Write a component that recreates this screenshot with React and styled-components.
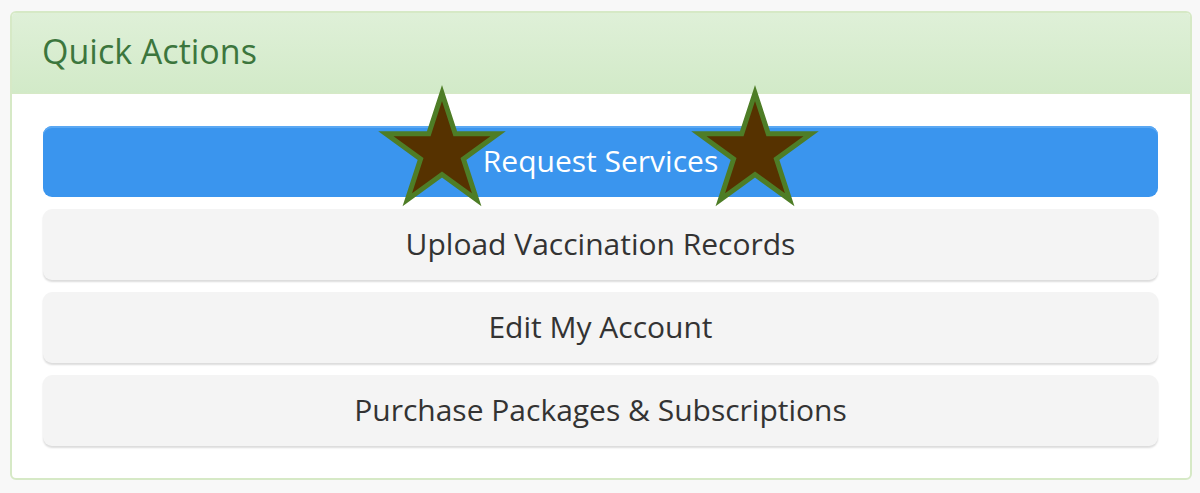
import React from "react";
import styled, { createGlobalStyle } from "styled-components";

const Global = createGlobalStyle`
  html, body { margin: 0; padding: 0; background: #f8f8f8; }
  body { font-family: "Open Sans", "Liberation Sans", sans-serif; }
`;

const Page = styled.div`
  padding: 11px 8px 0 10px;
`;

const Panel = styled.section`
  border: 2px solid #d6e9c6;
  border-radius: 6px;
  background: #fff;
  overflow: hidden;
`;

const Header = styled.header`
  height: 81px;
  box-sizing: border-box;
  display: flex;
  align-items: center;
  padding: 0 31px 5px 30px;
  background: linear-gradient(to bottom, #dff0d8 0%, #d2eac8 100%);
  border-bottom: 1px solid #d6e9c6;
`;

const Title = styled.h2`
  margin: 0;
  font-weight: 400;
  font-size: 34px;
  color: #3c763d;
  line-height: 1;
`;

const Body = styled.div`
  padding: 32px 32px 32px 31px;
  display: flex;
  flex-direction: column;
  gap: 12px;
`;

const ActionButton = styled.button`
  position: relative;
  height: 71px;
  border: none;
  border-radius: 9px;
  padding: 0 0 2px;
  font-family: "Open Sans", "Liberation Sans", sans-serif;
  font-size: 30px;
  font-weight: 400;
  cursor: pointer;
  background: ${(p) => (p.$primary ? "#3a95ee" : "#f4f4f4")};
  color: ${(p) => (p.$primary ? "#fff" : "#333")};
  box-shadow: ${(p) =>
    p.$primary
      ? "inset 0 2px 0 #5aa8f3"
      : "0 2px 2px rgba(0,0,0,0.14)"};
`;

const Star = styled.svg`
  position: absolute;
  top: -41px;
  left: ${(p) => p.$x}px;
  width: 134px;
  height: 124px;
  overflow: visible;
  pointer-events: none;
`;

function starPoints(cx, cy, R, r) {
  const pts = [];
  for (let i = 0; i < 10; i++) {
    const rad = i % 2 === 0 ? R : r;
    const a = (-90 + i * 36) * (Math.PI / 180);
    pts.push(`${(cx + rad * Math.cos(a)).toFixed(2)},${(cy + rad * Math.sin(a)).toFixed(2)}`);
  }
  return pts.join(" ");
}

const StarIcon = ({ x }) => (
  <Star $x={x} viewBox="0 0 134 124">
    <polygon
      points={starPoints(67, 67, 59, 59 * 0.382)}
      fill="#563200"
      stroke="#4e7d26"
      strokeWidth="5"
      strokeLinejoin="miter"
    />
  </Star>
);

export default function App() {
  return (
    <>
      <Global />
      <Page>
        <Panel>
          <Header>
            <Title>Quick Actions</Title>
          </Header>
          <Body>
            <ActionButton $primary>
              Request Services
              <StarIcon x={332} />
              <StarIcon x={645} />
            </ActionButton>
            <ActionButton>Upload Vaccination Records</ActionButton>
            <ActionButton>Edit My Account</ActionButton>
            <ActionButton>Purchase Packages &amp; Subscriptions</ActionButton>
          </Body>
        </Panel>
      </Page>
    </>
  );
}
